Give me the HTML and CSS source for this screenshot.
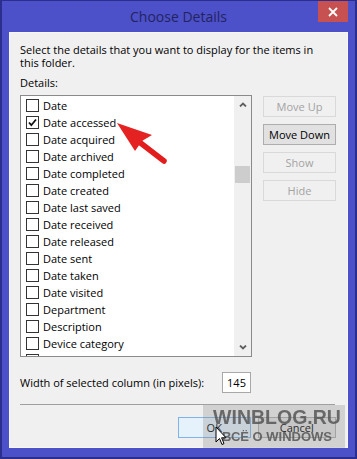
FILE: index.html
```html
<!DOCTYPE html>
<html>
<head>
<meta charset="utf-8">
<link rel="stylesheet" href="styles.css">
</head>
<body>
<div class="window">
  <div class="titlebar">
    <div class="title">Choose Details</div>
    <div class="close"><svg width="10" height="10" viewBox="0 0 10 10"><path d="M1 1L9 9M9 1L1 9" stroke="#fff" stroke-width="1.8"/></svg></div>
  </div>
  <div class="panel">
    <p class="desc">Select the details that you want to display for the items in this folder.</p>
    <div class="label">Details:</div>
    <div class="main">
      <div class="listbox">
        <div class="items">
          <div class="row"><span class="cb"></span>Date</div>
          <div class="row"><span class="cb"><svg width="11" height="11" viewBox="0 0 11 11"><path d="M2 5.5L4.3 8.2L9 2.5" fill="none" stroke="#111" stroke-width="1.8"/></svg></span>Date accessed</div>
          <div class="row"><span class="cb"></span>Date acquired</div>
          <div class="row"><span class="cb"></span>Date archived</div>
          <div class="row"><span class="cb"></span>Date completed</div>
          <div class="row"><span class="cb"></span>Date created</div>
          <div class="row"><span class="cb"></span>Date last saved</div>
          <div class="row"><span class="cb"></span>Date received</div>
          <div class="row"><span class="cb"></span>Date released</div>
          <div class="row"><span class="cb"></span>Date sent</div>
          <div class="row"><span class="cb"></span>Date taken</div>
          <div class="row"><span class="cb"></span>Date visited</div>
          <div class="row"><span class="cb"></span>Department</div>
          <div class="row"><span class="cb"></span>Description</div>
          <div class="row"><span class="cb"></span>Device category</div>
          <div class="row"><span class="cb"></span></div>
        </div>
        <div class="scrollbar">
          <div class="sbtn"><svg width="8" height="5" viewBox="0 0 8 5"><path d="M1 4.5L4 1.5L7 4.5" fill="none" stroke="#606060" stroke-width="1.8"/></svg></div>
          <div class="track"><div class="thumb"></div></div>
          <div class="sbtn"><svg width="8" height="5" viewBox="0 0 8 5"><path d="M1 0.5L4 3.5L7 0.5" fill="none" stroke="#606060" stroke-width="1.8"/></svg></div>
        </div>
      </div>
      <div class="side">
        <div class="btn disabled">Move Up</div>
        <div class="btn">Move Down</div>
        <div class="btn disabled">Show</div>
        <div class="btn disabled">Hide</div>
      </div>
    </div>
    <div class="widthrow">
      <span>Width of selected column (in pixels):</span>
      <span class="num">145</span>
    </div>
    <div class="sep"></div>
    <div class="footer">
      <div class="btn ok">OK</div>
      <div class="btn cancel">Cancel</div>
    </div>
  </div>
</div>
<svg class="arrow" width="357" height="459" viewBox="0 0 357 459">
  <line x1="138" y1="141" x2="164" y2="161" stroke="#e21d1d" stroke-width="5.5" stroke-linecap="round"/>
  <polygon points="117,123 152,135 142,141 135,151" fill="#e52222"/>
</svg>
<div class="watermark">
  <div class="wm1">WINBLOG.RU</div>
  <div class="wm2">ВСЁ О WINDOWS</div>
</div>
<svg class="cursor" width="12" height="20" viewBox="0 0 12 20">
  <path d="M1 1L1 16L4.5 12.5L7 18.5L9 17.6L6.6 11.8L11 11.8Z" fill="#fff" stroke="#000" stroke-width="1"/>
</svg>
</body>
</html>
```
FILE: styles.css
```css
html, body {
  margin: 0;
  padding: 0;
}
body {
  width: 357px;
  height: 459px;
  position: relative;
  overflow: hidden;
  font-family: "Open Sans", "Noto Sans", sans-serif;
  font-size: 11px;
  color: #000;
}
.window {
  box-sizing: border-box;
  width: 357px;
  height: 459px;
  background: #4c50c9;
  border-top: 1px solid #2b2e8c;
  border-left: 2px solid #2b2e8c;
  border-right: 2px solid #2b2e8c;
  border-bottom: 2px solid #2b2e8c;
  display: flex;
  flex-direction: column;
  padding: 0 7px 9px 7px;
}
.titlebar {
  height: 31px;
  display: flex;
  position: relative;
  justify-content: center;
}
.title {
  font-size: 14px;
  color: #23245e;
  line-height: 31px;
}
.close {
  position: absolute;
  right: 0;
  top: 0;
  width: 30px;
  height: 21px;
  background: #c75050;
  display: flex;
  align-items: center;
  justify-content: center;
}
.panel {
  flex: 1;
  background: #f0f0f0;
  border: 1px solid #f6f6fb;
  padding: 10px 11px 0 10px;
  display: flex;
  flex-direction: column;
}
.desc {
  margin: 0;
  line-height: 13px;
  width: 310px;
}
.label {
  margin-top: 7px;
  line-height: 13px;
}
.main {
  margin-top: 6px;
  display: flex;
  gap: 11px;
}
.listbox {
  width: 233px;
  height: 262px;
  box-sizing: border-box;
  border: 1px solid #8a8a8a;
  background: #fff;
  display: flex;
  overflow: hidden;
}
.items {
  flex: 1;
  padding-top: 1px;
  padding-left: 5px;
  overflow: hidden;
}
.row {
  height: 17px;
  display: flex;
  align-items: center;
  gap: 4px;
  white-space: nowrap;
}
.cb {
  width: 11px;
  height: 11px;
  border: 1px solid #333;
  background: #fff;
  display: flex;
  align-items: center;
  justify-content: center;
  flex: none;
}
.scrollbar {
  width: 17px;
  background: #f0f0f0;
  display: flex;
  flex-direction: column;
}
.sbtn {
  height: 17px;
  display: flex;
  align-items: center;
  justify-content: center;
}
.track {
  flex: 1;
  padding: 53px 1px 0 1px;
}
.thumb {
  height: 17px;
  background: #cdcdcd;
}
.side {
  display: flex;
  flex-direction: column;
  gap: 7px;
  padding-top: 1px;
}
.btn {
  width: 73px;
  height: 21px;
  box-sizing: border-box;
  border: 1px solid #adadad;
  background: #e1e1e1;
  display: flex;
  align-items: center;
  justify-content: center;
}
.btn.disabled {
  border-color: #d9d9d9;
  background: #f0f0f0;
  color: #a3a3a3;
}
.widthrow {
  margin-top: 15px;
  display: flex;
  align-items: center;
  justify-content: space-between;
  width: 231px;
}
.num {
  width: 29px;
  height: 21px;
  box-sizing: border-box;
  border: 1px solid #a8a8a8;
  background: #fff;
  display: flex;
  align-items: center;
  justify-content: center;
}
.sep {
  margin-top: 11px;
  width: 315px;
  height: 1px;
  background: #a0a0a0;
}
.footer {
  margin-top: 12px;
  display: flex;
  gap: 7px;
  padding-left: 158px;
}
.btn.ok {
  border-color: #7eb4ea;
  background: #e5f1fb;
}
.btn.cancel {
  width: 79px;
}
.arrow {
  position: absolute;
  left: 0;
  top: 0;
  pointer-events: none;
}
.watermark {
  position: absolute;
  left: 203px;
  top: 405px;
  width: 142px;
  height: 43px;
  background: rgba(140, 140, 140, 0.3);
  display: flex;
  flex-direction: column;
  align-items: center;
  font-family: "Liberation Sans", sans-serif;
  font-weight: bold;
  color: rgba(85, 85, 85, 0.85);
  filter: blur(0.6px);
}
.wm1 {
  font-size: 19.5px;
  line-height: 24px;
  padding-left: 6px;
}
.wm2 {
  font-size: 13px;
  line-height: 15px;
  padding-left: 6px;
}
.cursor {
  position: absolute;
  left: 215px;
  top: 426px;
}
```
